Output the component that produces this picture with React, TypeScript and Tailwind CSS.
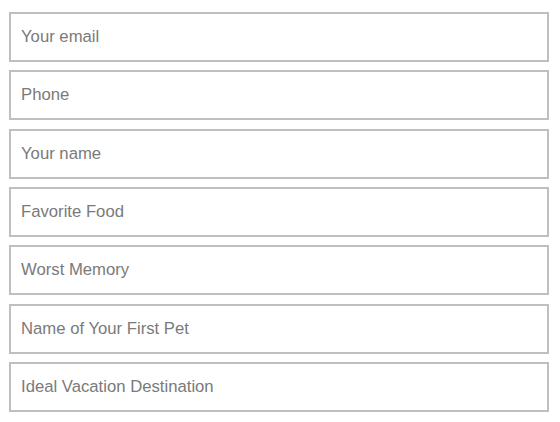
const fields = [
  { id: 'email', type: 'email', placeholder: 'Your email' },
  { id: 'phone', type: 'tel', placeholder: 'Phone' },
  { id: 'name', type: 'text', placeholder: 'Your name' },
  { id: 'food', type: 'text', placeholder: 'Favorite Food' },
  { id: 'memory', type: 'text', placeholder: 'Worst Memory' },
  { id: 'pet', type: 'text', placeholder: 'Name of Your First Pet' },
  { id: 'vacation', type: 'text', placeholder: 'Ideal Vacation Destination' },
];

export default function App() {
  return (
    <div className="min-h-screen bg-white pt-[12px] px-[9px] font-['Liberation_Sans',Arial,sans-serif]">
      <form className="flex flex-col gap-[8.33px] w-[540px]">
        {fields.map((f) => (
          <input
            key={f.id}
            type={f.type}
            placeholder={f.placeholder}
            className="h-[50px] w-full border-2 border-[#bfbfbf] bg-white px-[10px] text-[16.7px] text-[#333] placeholder:text-[#7a7a7a] outline-none"
          />
        ))}
      </form>
    </div>
  );
}
